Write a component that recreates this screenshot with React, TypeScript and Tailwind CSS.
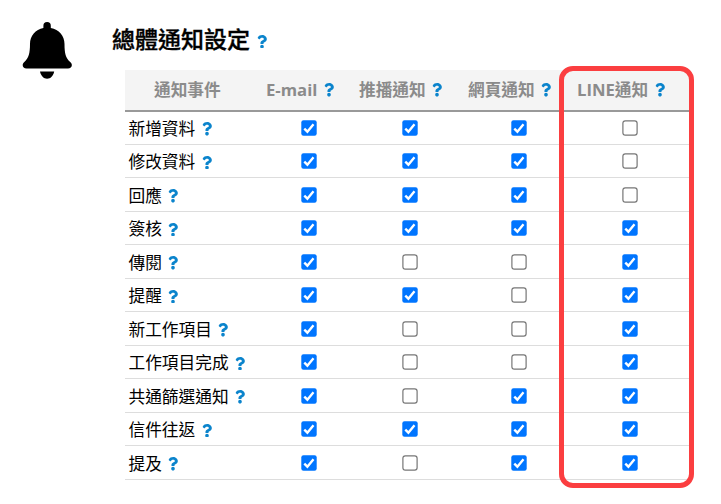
type HelpProps = { className?: string };

function Help({ className = '' }: HelpProps) {
  return (
    <svg
      viewBox="0 0 384 512"
      preserveAspectRatio="none"
      className={`h-[13.5px] w-[10px] shrink-0 fill-[#0b84cc] ${className}`}
      aria-label="?"
    >
      <path d="M202.021 0C122.202 0 70.503 32.703 29.914 91.026c-7.363 10.58-5.093 25.086 5.178 32.874l43.138 32.709c10.373 7.865 25.132 6.026 33.253-4.148 25.049-31.381 43.63-49.449 82.757-49.449 30.764 0 68.816 19.799 68.816 49.631 0 22.552-18.617 34.134-48.993 51.164-35.423 19.86-82.299 44.576-82.299 106.405V320c0 13.255 10.745 24 24 24h72.471c13.255 0 24-10.745 24-24v-5.773c0-42.86 125.268-44.645 125.268-160.627C377.504 66.256 286.902 0 202.021 0zM192 373.459c-38.196 0-69.271 31.075-69.271 69.271 0 38.195 31.075 69.27 69.271 69.27s69.271-31.075 69.271-69.271-31.075-69.27-69.271-69.27z" />
    </svg>
  );
}

function Checkbox({ checked }: { checked: boolean }) {
  return (
    <svg viewBox="0 0 16 16" className="size-4" role="checkbox" aria-checked={checked}>
      {checked ? (
        <>
          <rect x="0.3" y="0.3" width="15.4" height="15.4" rx="2.2" fill="#0075ff" />
          <path d="M3.3 8.6 6.4 11.7 12.5 4.2" fill="none" stroke="#fff" strokeWidth="2.4" />
        </>
      ) : (
        <rect x="0.9" y="0.9" width="14.2" height="14.2" rx="2.4" fill="#fff" stroke="#767676" strokeWidth="1.2" />
      )}
    </svg>
  );
}

const headers = ['E-mail', '推播通知', '網頁通知', 'LINE通知'];

const rows: [string, boolean[]][] = [
  ['新增資料', [true, true, true, false]],
  ['修改資料', [true, true, true, false]],
  ['回應', [true, true, true, false]],
  ['簽核', [true, true, true, true]],
  ['傳閱', [true, false, false, true]],
  ['提醒', [true, true, false, true]],
  ['新工作項目', [true, false, false, true]],
  ['工作項目完成', [true, false, false, true]],
  ['共通篩選通知', [true, false, true, true]],
  ['信件往返', [true, true, true, true]],
  ['提及', [true, false, true, true]],
];

const columns = 'grid grid-cols-[137px_93px_109px_109px_113px] items-center';

export default function App() {
  return (
    <div className="relative flex h-[504px] w-[721px] overflow-hidden bg-white font-['Open_Sans','Noto_Sans_CJK_TC',sans-serif] text-black">
      <div className="w-[112px] shrink-0 pt-[22px] pl-[22px]">
        <svg viewBox="0 0 50 57" className="h-[57px] w-[50px]">
          <path d="M21.4 6V3.7a3.7 3.7 0 0 1 7.4 0V6C37 7.4 42.5 14 42.5 22c0 9 1.2 14.2 5.7 18 3.1 2.6 1.5 6.5-2.2 6.5H4.500C.800 46.500-.700 42.600 2.300 40 6.700 36.200 8 31 8 22c0-8 5.500-14.600 13.400-16Z" />
          <path d="M18 49.500h14.200c-1 4.700-3.700 7.200-7.100 7.200S19 54.200 18 49.500Z" />
        </svg>
      </div>
      <main>
        <h1 className="flex h-[70px] items-center pt-[9px] text-[23px] leading-none font-medium">
          <span className="[-webkit-text-stroke:0.35px_black]">總體通知設定</span>
          <Help className="mt-1 ml-[7px]" />
        </h1>
        <section className="ml-[13px] w-[564px]">
          <div className={`${columns} h-[42px] border-b-2 border-[#999] bg-[#f4f4f4] text-[16.7px] leading-none font-bold text-[#8b8b8b]`}>
            <span className="pl-[29px]">通知事件</span>
            {headers.map((header) => (
              <span key={header} className="flex items-center pl-1 whitespace-nowrap">
                {header}
                <Help className="ml-[6.5px]" />
              </span>
            ))}
          </div>
          <div className="-mt-[0.75px]">
            {rows.map(([label, values]) => (
              <div key={label} className={`${columns} h-[33.5px] border-b border-[#ddd] text-[16.7px] leading-none`}>
                <span className="flex items-center pt-[3.5px] pl-[3.5px]">
                  {label}
                  <Help className="ml-[6.5px]" />
                </span>
                {values.map((checked, index) => (
                  <span key={headers[index]} className="flex justify-center">
                    <Checkbox checked={checked} />
                  </span>
                ))}
              </div>
            ))}
          </div>
        </section>
      </main>
      <div className="absolute top-[66px] left-[559px] h-[422px] w-[135px] rounded-[14px] border-5 border-[#fb3e40]" />
    </div>
  );
}
